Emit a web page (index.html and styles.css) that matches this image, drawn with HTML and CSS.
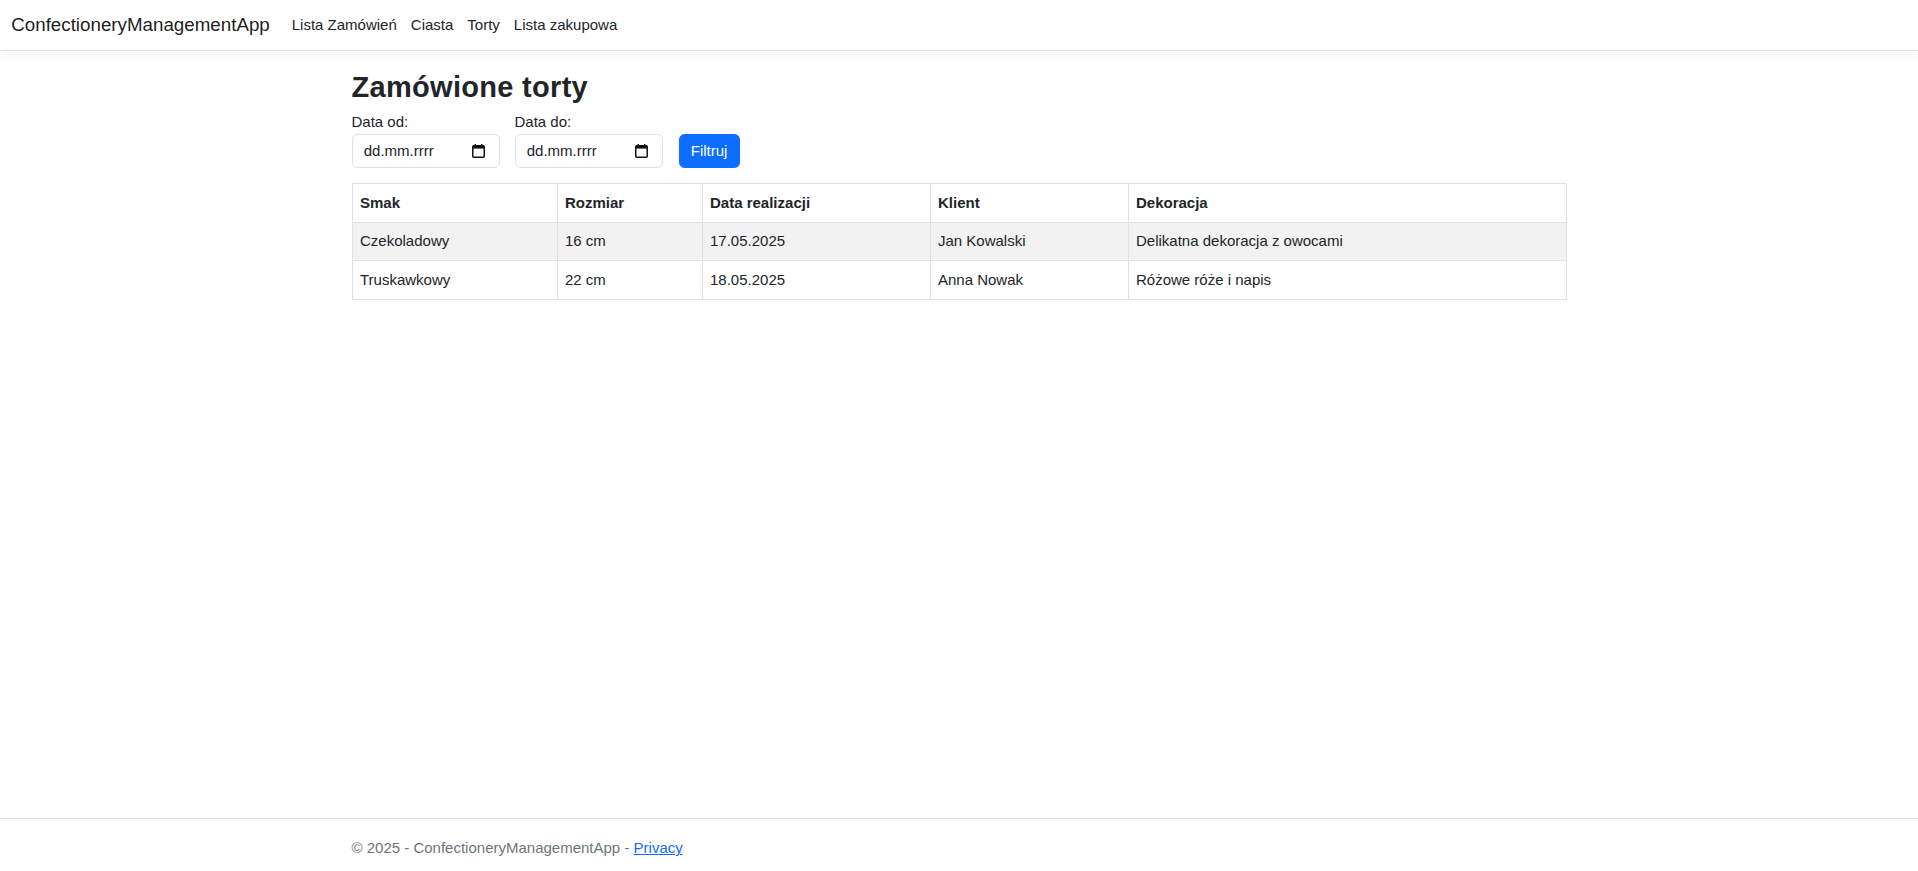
FILE: index.html
```html
<!DOCTYPE html>
<html lang="pl">
<head>
<meta charset="utf-8">
<title>Torty - ConfectioneryManagementApp</title>
<link rel="stylesheet" href="styles.css">
</head>
<body>
<header class="navbar">
  <div class="navbar-inner">
    <a class="brand" href="#">ConfectioneryManagementApp</a>
    <nav class="nav">
      <a class="nav-link" href="#">Lista Zamówień</a>
      <a class="nav-link" href="#">Ciasta</a>
      <a class="nav-link" href="#">Torty</a>
      <a class="nav-link" href="#">Lista zakupowa</a>
    </nav>
  </div>
</header>
<main class="container main">
  <h2 class="page-title">Zamówione torty</h2>
  <form class="filter">
    <div class="field">
      <label class="field-label" for="od">Data od:</label>
      <div class="date-input">
        <input id="od" type="text" placeholder="dd.mm.rrrr">
        <svg class="cal" width="13" height="14" viewBox="0 0 13 14" aria-hidden="true"><rect x="0.75" y="1.75" width="11.5" height="11.5" rx="1" fill="none" stroke="#111" stroke-width="1.5"/><rect x="1" y="2" width="11" height="2.6" fill="#111"/><rect x="2.6" y="0" width="1.4" height="2.5" fill="#111"/><rect x="9" y="0" width="1.4" height="2.5" fill="#111"/></svg>
      </div>
    </div>
    <div class="field">
      <label class="field-label" for="do">Data do:</label>
      <div class="date-input">
        <input id="do" type="text" placeholder="dd.mm.rrrr">
        <svg class="cal" width="13" height="14" viewBox="0 0 13 14" aria-hidden="true"><rect x="0.75" y="1.75" width="11.5" height="11.5" rx="1" fill="none" stroke="#111" stroke-width="1.5"/><rect x="1" y="2" width="11" height="2.6" fill="#111"/><rect x="2.6" y="0" width="1.4" height="2.5" fill="#111"/><rect x="9" y="0" width="1.4" height="2.5" fill="#111"/></svg>
      </div>
    </div>
    <button class="btn" type="button">Filtruj</button>
  </form>
  <table class="table">
    <colgroup>
      <col class="c1"><col class="c2"><col class="c3"><col class="c4"><col class="c5">
    </colgroup>
    <thead>
      <tr><th>Smak</th><th>Rozmiar</th><th>Data realizacji</th><th>Klient</th><th>Dekoracja</th></tr>
    </thead>
    <tbody>
      <tr class="striped"><td>Czekoladowy</td><td>16 cm</td><td>17.05.2025</td><td>Jan Kowalski</td><td>Delikatna dekoracja z owocami</td></tr>
      <tr><td>Truskawkowy</td><td>22 cm</td><td>18.05.2025</td><td>Anna Nowak</td><td>Różowe róże i napis</td></tr>
    </tbody>
  </table>
</main>
<footer class="footer">
  <div class="container footer-inner">&copy; 2025 - ConfectioneryManagementApp - <a href="#" class="footer-link">Privacy</a></div>
</footer>
</body>
</html>
```
FILE: styles.css
```css
* { box-sizing: border-box; }
html, body { margin: 0; padding: 0; }
body {
  font-family: "Liberation Sans", Arial, sans-serif;
  font-size: 15px;
  line-height: 1.5;
  color: #212529;
  background: #fff;
  min-height: 100vh;
  display: flex;
  flex-direction: column;
}
a { text-decoration: none; }

.navbar {
  background: #fff;
  border-bottom: 1px solid #dee2e6;
  box-shadow: 0 4px 11px rgba(0,0,0,0.05);
  padding: 6.5px 0 5.5px;
  margin-bottom: 19px;
}
.navbar-inner {
  display: flex;
  align-items: center;
  padding: 0 11.25px;
}
.brand {
  font-size: 18.75px;
  line-height: 28px;
  padding: 4.5px 0;
  margin-right: 15px;
  color: rgba(0,0,0,0.9);
}
.nav { display: flex; }
.nav-link {
  padding: 7.5px 7px;
  color: #212529;
  font-size: 15px;
}

.container {
  width: 100%;
  max-width: 1237.5px;
  margin: 0 auto;
  padding: 0 11.25px;
}
.main { padding-bottom: 15px; }

.page-title {
  font-size: 29px;
  font-weight: 700;
  line-height: 1.2;
  margin: 0 0 7px;
  letter-spacing: 0.3px;
}

.filter {
  display: flex;
  align-items: flex-end;
  gap: 15px;
  margin-bottom: 15px;
}
.field { display: flex; flex-direction: column; }
.field-label { line-height: 22.5px; }
.date-input {
  position: relative;
  width: 148px;
  height: 34.5px;
  border: 1px solid #dee2e6;
  border-radius: 5.6px;
  display: flex;
  align-items: center;
  padding: 0 14px 0 11.25px;
  background: #fff;
}
.date-input input {
  border: 0;
  outline: 0;
  padding: 0;
  font: inherit;
  color: #212529;
  width: 100%;
  background: transparent;
}
.date-input input::placeholder { color: #212529; opacity: 1; }
.cal { flex: none; }

.btn {
  height: 34.5px;
  padding: 0 11.25px;
  background: #0d6efd;
  color: #fff;
  border: 1px solid #0d6efd;
  border-radius: 5.6px;
  font: inherit;
  margin-left: 1px;
}

.table {
  width: 100%;
  table-layout: fixed;
  border-collapse: collapse;
  margin-bottom: 15px;
}
.c1 { width: 205px; }
.c2 { width: 145px; }
.c3 { width: 228px; }
.c4 { width: 198px; }
.c5 { width: auto; }
.table th, .table td {
  border: 1px solid #dee2e6;
  padding: 7.5px 7.5px;
  text-align: left;
  vertical-align: top;
  line-height: 22.5px;
  color: #212529;
}
.table th { font-weight: 700; }
.table .striped td { background: #f2f2f2; }

.footer {
  margin-top: auto;
  border-top: 1px solid #dee2e6;
  color: #6c757d;
  white-space: nowrap;
}
.footer-inner { line-height: 47px; padding-top: 5px; }
.footer-link { color: #0d6efd; text-decoration: underline; }
```
